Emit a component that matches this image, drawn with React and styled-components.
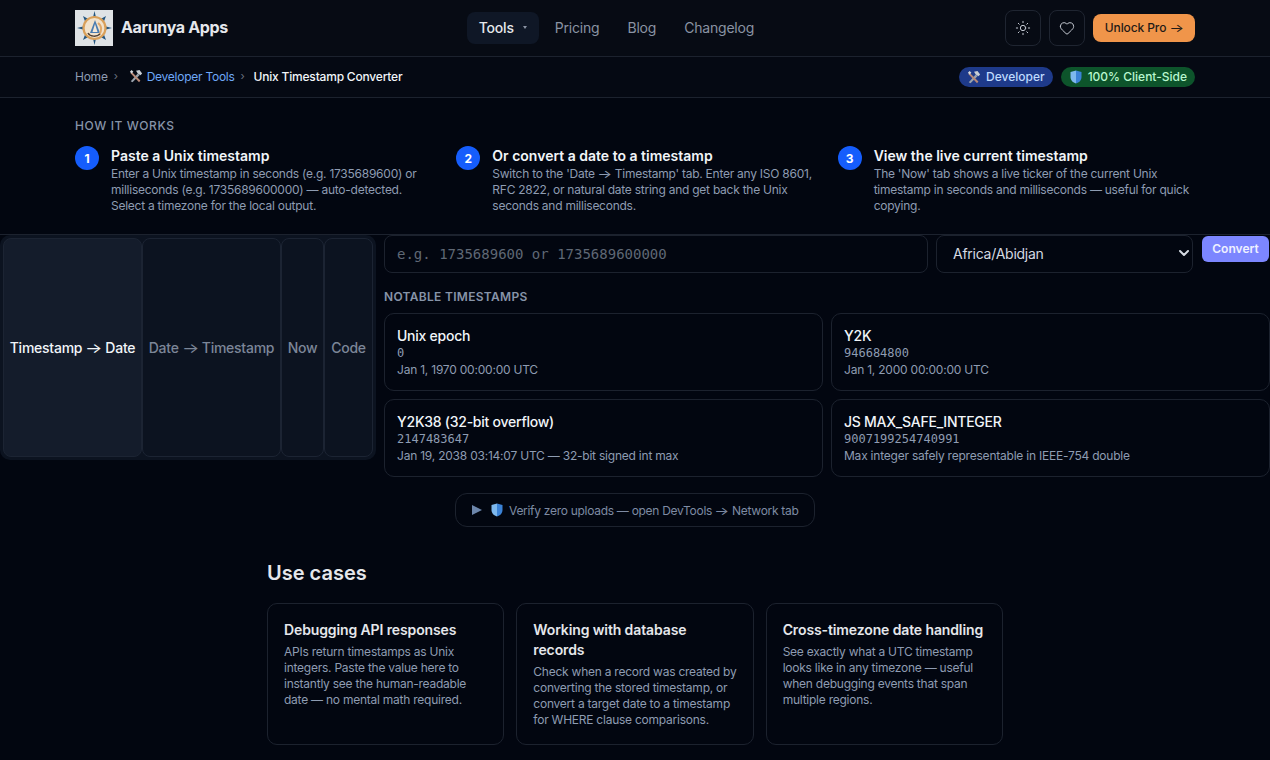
import React from 'react';
import styled, { createGlobalStyle } from 'styled-components';
import { Sun, Heart, ChevronDown } from 'lucide-react';

const GlobalStyle = createGlobalStyle`
  * { box-sizing: border-box; }
  html, body { margin: 0; padding: 0; background: #020610; }
  body {
    font-family: Inter, "Noto Sans", sans-serif;
    color: #e2e8f0;
    overflow: hidden;
    height: 760px;
  }
`;

const Page = styled.div`
  width: 1270px;
  height: 760px;
  overflow: hidden;
`;

const Header = styled.header`
  height: 57px;
  background: #070b14;
  border-bottom: 1px solid #1c222e;
  padding: 0 75px;
  display: flex;
  justify-content: space-between;
  align-items: center;
`;

const Brand = styled.div`
  display: flex;
  align-items: center;
  gap: 8px;
  font-size: 16px;
  font-weight: 700;
  letter-spacing: -0.35px;
  color: #e5e7eb;
  span { margin-top: -2px; }
`;

const LogoBox = styled.div`
  width: 38px;
  height: 36px;
  background: #dfe3e6;
  display: flex;
  align-items: center;
  justify-content: center;
`;

const Nav = styled.nav`
  display: flex;
  align-items: center;
  gap: 4px;
`;

const NavItem = styled.div`
  height: 32px;
  display: flex;
  align-items: center;
  gap: 9px;
  padding: 0 12px 2px;
  border-radius: 8px;
  font-size: 14px;
  letter-spacing: -0.2px;
  font-weight: ${p => (p.$active ? 500 : 400)};
  color: ${p => (p.$active ? '#e5e7eb' : '#8a93a3')};
  background: ${p => (p.$active ? '#0f1726' : 'transparent')};
`;

const Caret = styled.span`
  width: 0;
  height: 0;
  border-left: 2.5px solid transparent;
  border-right: 2.5px solid transparent;
  border-top: 3px solid #8a93a3;
`;

const Actions = styled.div`
  display: flex;
  justify-content: flex-end;
  align-items: center;
  gap: 8px;
`;

const IconButton = styled.div`
  width: 36px;
  height: 36px;
  border: 1px solid #1f2531;
  border-radius: 8px;
  display: flex;
  align-items: center;
  justify-content: center;
  color: #c3c8d1;
`;

const ProButton = styled.div`
  height: 28px;
  width: 102px;
  padding-bottom: 2px;
  border-radius: 8px;
  background: #f0954a;
  color: #1f1a17;
  font-size: 12px;
  font-weight: 500;
  letter-spacing: -0.1px;
  display: flex;
  align-items: center;
  justify-content: center;
`;

const CrumbBar = styled.div`
  height: 41px;
  background: #050913;
  border-bottom: 1px solid #1c222e;
  padding: 0 75px;
  display: flex;
  align-items: center;
  justify-content: space-between;
  font-size: 12px;
`;

const Crumbs = styled.div`
  display: flex;
  align-items: center;
  gap: 6px;
  padding-bottom: 2px;
`;

const Crumb = styled.span`
  display: flex;
  align-items: center;
  gap: 4px;
  letter-spacing: ${p => (p.$current ? '-0.2px' : '-0.25px')};
  margin-left: ${p => (p.$current ? '-2px' : '0')};
  color: ${p => p.$color};
  font-weight: ${p => (p.$current ? 500 : 400)};
`;

const Sep = styled.span`
  width: 4px;
  margin-right: 5px;
  color: #6b7280;
  font-size: 11px;
`;

const Badges = styled.div`
  display: flex;
  gap: 8px;
`;

const Badge = styled.span`
  height: 20px;
  padding: 0 8px 1px;
  border-radius: 10px;
  display: flex;
  align-items: center;
  gap: 5px;
  font-size: 12px;
  font-weight: 500;
  background: ${p => p.$bg};
  color: ${p => p.$color};
`;

const HowItWorks = styled.section`
  height: 136px;
  padding: 20px 75px 0;
  background: #020610;
`;

const SmallHead = styled.div`
  font-size: 12px;
  line-height: 16px;
  font-weight: 500;
  letter-spacing: 0.6px;
  color: #8794a8;
`;

const Steps = styled.div`
  margin-top: 12px;
  display: grid;
  grid-template-columns: repeat(3, 1fr);
  gap: 24px;
`;

const Step = styled.div`
  display: flex;
  gap: 12px;
`;

const StepNum = styled.div`
  width: 24px;
  height: 24px;
  flex: none;
  border-radius: 50%;
  background: #155dfc;
  color: #fff;
  font-size: 12px;
  font-weight: 700;
  display: flex;
  align-items: center;
  justify-content: center;
`;

const StepTitle = styled.div`
  font-size: 14px;
  line-height: 20px;
  font-weight: 600;
  color: #f1f5f9;
`;

const StepText = styled.div`
  font-size: 12px;
  line-height: 16px;
  letter-spacing: -0.25px;
  color: #8e9cb2;
`;

const Tool = styled.section`
  display: grid;
  grid-template-columns: 376px 1fr;
  border-top: 1px solid #1c222e;
  column-gap: 8px;
  align-items: start;
`;

const TabList = styled.div`
  display: flex;
  height: 225px;
  padding: 3px;
  background: #0c1320;
  border-radius: 10px;
`;

const Tab = styled.div`
  flex: none;
  width: ${p => p.$w}px;
  border: 1px solid #1c2433;
  border-radius: 8px;
  background: ${p => (p.$active ? '#141c2b' : '#0c1320')};
  color: ${p => (p.$active ? '#f1f5f9' : '#7c8698')};
  font-size: 14px;
  font-weight: 500;
  letter-spacing: -0.25px;
  display: flex;
  align-items: center;
  justify-content: center;
  white-space: nowrap;
`;

const Panel = styled.div`
  display: flex;
  flex-direction: column;
`;

const InputRow = styled.div`
  display: flex;
  align-items: flex-start;
  gap: 8px;
`;

const TsInput = styled.input`
  width: 544px;
  height: 38px;
  background: transparent;
  border: 1px solid #1c222e;
  border-radius: 8px;
  padding: 0 12px;
  font-family: "DejaVu Sans Mono", monospace;
  font-size: 14px;
  color: #e5e7eb;
  &::placeholder { color: #5f6875; opacity: 1; }
`;

const Select = styled.div`
  width: 257px;
  height: 38px;
  border: 1px solid #1c222e;
  border-radius: 8px;
  padding: 0 0 2px 16px;
  font-size: 14px;
  letter-spacing: -0.25px;
  color: #d5dae2;
  display: flex;
  align-items: center;
  justify-content: space-between;
`;

const Convert = styled.div`
  width: 67px;
  height: 26px;
  margin: 1px 0 0 1px;
  padding-bottom: 2px;
  border-radius: 6px;
  background: #7c86ff;
  color: #eef0ff;
  font-size: 12px;
  font-weight: 600;
  display: flex;
  align-items: center;
  justify-content: center;
`;

const NotableHead = styled(SmallHead)`
  margin-top: 16px;
  font-weight: 600;
  letter-spacing: 0.3px;
`;

const NotableGrid = styled.div`
  margin-top: 8px;
  display: grid;
  grid-template-columns: repeat(2, 1fr);
  gap: 8px;
`;

const NotableCard = styled.div`
  height: 78px;
  border: 1px solid #1c222e;
  border-radius: 10px;
  padding: 13px 12px 0;
`;

const CardTitle = styled.div`
  font-size: 14px;
  line-height: 18px;
  font-weight: 500;
  letter-spacing: -0.25px;
  color: #f1f5f9;
`;

const CardMono = styled.div`
  font-family: "DejaVu Sans Mono", monospace;
  font-size: 12px;
  line-height: 16px;
  margin-bottom: 1px;
  color: #8e9cb2;
`;

const CardText = styled.div`
  font-size: 12px;
  line-height: 16px;
  letter-spacing: -0.22px;
  color: #8e9cb2;
`;

const VerifyRow = styled.div`
  margin-top: 16px;
  display: flex;
  justify-content: center;
`;

const Verify = styled.div`
  width: 360px;
  height: 34px;
  border: 1px solid #1c222e;
  border-radius: 12px;
  padding-left: 16px;
  display: flex;
  align-items: center;
  gap: 5px;
  font-size: 12px;
  letter-spacing: -0.29px;
  color: #7e8ba3;
`;

const PlayIcon = styled.span`
  width: 0;
  height: 0;
  border-top: 5px solid transparent;
  border-bottom: 5px solid transparent;
  border-left: 10px solid #6c86ab;
  margin-right: 3px;
`;

const UseCases = styled.section`
  width: 736px;
  margin: 32px auto 0;
`;

const UseHead = styled.h2`
  margin: 0 0 16px;
  font-size: 20px;
  line-height: 28px;
  font-weight: 600;
  color: #e5e7eb;
`;

const UseGrid = styled.div`
  display: grid;
  grid-template-columns: repeat(3, 1fr);
  gap: 12px;
`;

const UseCard = styled.div`
  height: 142px;
  border: 1px solid #1c222e;
  border-radius: 10px;
  padding: 16px;
`;

const UseTitle = styled.div`
  font-size: 14px;
  line-height: 20px;
  font-weight: 600;
  letter-spacing: -0.12px;
  color: #e5e7eb;
  margin-bottom: 4px;
`;

const UseText = styled.div`
  font-size: 12px;
  line-height: 16px;
  letter-spacing: -0.24px;
  color: #8e9cb2;
`;

// the reference font has a long thin arrow, Inter's is shorter
const Arrow = styled.span`
  display: inline-block;
  font-weight: 400;
  letter-spacing: 0;
  margin: 0 0.1em;
  transform: scaleX(1.3);
`;

const withArrows = (text) => {
  const parts = text.split('→');
  return parts.map((part, i) => (
    <React.Fragment key={i}>
      {i > 0 && <Arrow>→</Arrow>}
      {part}
    </React.Fragment>
  ));
};

// small compass rose standing in for the logo picture
const Logo = () => (
  <svg width="38" height="36" viewBox="0 0 38 36">
    <g fill="#23557f">
      <polygon points="19.5,1 22,12 17,12" />
      <polygon points="19.5,35 22,24 17,24" />
      <polygon points="2,18 12,15.5 12,20.5" />
      <polygon points="37,18 27,15.5 27,20.5" />
      <polygon points="8,6 15,10 11,14" />
      <polygon points="31,6 28,14 24,10" />
      <polygon points="8,30 11,22 15,26" />
      <polygon points="31,30 24,26 28,22" />
    </g>
    <circle cx="19.5" cy="18" r="11" fill="#f1e2cc" stroke="#d9a05a" strokeWidth="2.2" />
    <polygon points="20,10 25,23 15,23" fill="#4a7cb0" />
    <polygon points="20,14 22.5,22 17.5,22" fill="#f4e8d8" />
    <path d="M23 13 C27 16 27 21 24 25" fill="none" stroke="#e0a96a" strokeWidth="2" />
    <path d="M13 23 C15 27 22 27 25 24" fill="none" stroke="#4f4034" strokeWidth="1.5" />
  </svg>
);

const ToolsEmoji = () => (
  <svg width="14" height="14" viewBox="0 0 16 16">
    <path d="M2 14 L10 5 L12 7 L4 15 Z" fill="#9aa3ad" />
    <path d="M8 2 L12 1 L15 5 L13 7 L10 5 Z" fill="#c9ced4" />
    <path d="M3 3 L13 13 L11.5 15 L1.5 4.5 Z" fill="#b98a78" />
    <path d="M1 3 L3 1 L5 3 L3 5 Z" fill="#d5d9de" />
  </svg>
);

const ShieldEmoji = () => (
  <svg width="14" height="14" viewBox="0 0 14 14">
    <path d="M7 0.5 L12.5 2 V7 C12.5 10.5 10 12.5 7 13.5 Z" fill="#3b82d6" />
    <path d="M7 0.5 L1.5 2 V7 C1.5 10.5 4 12.5 7 13.5 Z" fill="#7db8ee" />
  </svg>
);

const steps = [
  {
    title: 'Paste a Unix timestamp',
    text: 'Enter a Unix timestamp in seconds (e.g. 1735689600) or milliseconds (e.g. 1735689600000) — auto-detected. Select a timezone for the local output.',
  },
  {
    title: 'Or convert a date to a timestamp',
    text: "Switch to the 'Date → Timestamp' tab. Enter any ISO 8601, RFC 2822, or natural date string and get back the Unix seconds and milliseconds.",
  },
  {
    title: 'View the live current timestamp',
    text: "The 'Now' tab shows a live ticker of the current Unix timestamp in seconds and milliseconds — useful for quick copying.",
  },
];

const tabs = [
  { label: 'Timestamp → Date', w: 139, active: true },
  { label: 'Date → Timestamp', w: 139 },
  { label: 'Now', w: 43 },
  { label: 'Code', w: 49 },
];

const notable = [
  { title: 'Unix epoch', value: '0', note: 'Jan 1, 1970 00:00:00 UTC' },
  { title: 'Y2K', value: '946684800', note: 'Jan 1, 2000 00:00:00 UTC' },
  { title: 'Y2K38 (32-bit overflow)', value: '2147483647', note: 'Jan 19, 2038 03:14:07 UTC — 32-bit signed int max' },
  { title: 'JS MAX_SAFE_INTEGER', value: '9007199254740991', note: 'Max integer safely representable in IEEE-754 double' },
];

const useCases = [
  {
    title: 'Debugging API responses',
    text: 'APIs return timestamps as Unix integers. Paste the value here to instantly see the human-readable date — no mental math required.',
  },
  {
    title: 'Working with database records',
    text: 'Check when a record was created by converting the stored timestamp, or convert a target date to a timestamp for WHERE clause comparisons.',
  },
  {
    title: 'Cross-timezone date handling',
    text: 'See exactly what a UTC timestamp looks like in any timezone — useful when debugging events that span multiple regions.',
  },
];

export default function App() {
  return (
    <Page>
      <GlobalStyle />
      <Header>
        <Brand>
          <LogoBox><Logo /></LogoBox>
          <span>Aarunya Apps</span>
        </Brand>
        <Nav>
          <NavItem $active>Tools <Caret /></NavItem>
          <NavItem>Pricing</NavItem>
          <NavItem>Blog</NavItem>
          <NavItem>Changelog</NavItem>
        </Nav>
        <Actions>
          <IconButton><Sun size={16} strokeWidth={1.5} /></IconButton>
          <IconButton><Heart size={16} strokeWidth={1.5} /></IconButton>
          <ProButton><span>Unlock Pro {withArrows('→')}</span></ProButton>
        </Actions>
      </Header>

      <CrumbBar>
        <Crumbs>
          <Crumb $color="#8e9cb2">Home</Crumb>
          <Sep>›</Sep>
          <Crumb $color="#6ea8f7"><ToolsEmoji /> Developer Tools</Crumb>
          <Sep>›</Sep>
          <Crumb $color="#f1f5f9" $current>Unix Timestamp Converter</Crumb>
        </Crumbs>
        <Badges>
          <Badge $bg="#1e3a8a" $color="#bfdbfe"><ToolsEmoji /> Developer</Badge>
          <Badge $bg="#0d542b" $color="#b9f8cf"><ShieldEmoji /> 100% Client-Side</Badge>
        </Badges>
      </CrumbBar>

      <HowItWorks>
        <SmallHead>HOW IT WORKS</SmallHead>
        <Steps>
          {steps.map((s, i) => (
            <Step key={s.title}>
              <StepNum>{i + 1}</StepNum>
              <div>
                <StepTitle>{s.title}</StepTitle>
                <StepText>{withArrows(s.text)}</StepText>
              </div>
            </Step>
          ))}
        </Steps>
      </HowItWorks>

      <Tool>
        <TabList>
          {tabs.map(t => (
            <Tab key={t.label} $w={t.w} $active={t.active}>
              <span>{withArrows(t.label)}</span>
            </Tab>
          ))}
        </TabList>
        <Panel>
          <InputRow>
            <TsInput placeholder="e.g. 1735689600 or 1735689600000" />
            <Select>
              Africa/Abidjan
              <ChevronDown size={16} strokeWidth={3} color="#d5dae2" />
            </Select>
            <Convert>Convert</Convert>
          </InputRow>
          <NotableHead>NOTABLE TIMESTAMPS</NotableHead>
          <NotableGrid>
            {notable.map(n => (
              <NotableCard key={n.title}>
                <CardTitle>{n.title}</CardTitle>
                <CardMono>{n.value}</CardMono>
                <CardText>{n.note}</CardText>
              </NotableCard>
            ))}
          </NotableGrid>
        </Panel>
      </Tool>

      <VerifyRow>
        <Verify>
          <PlayIcon />
          <ShieldEmoji />
          <span>{withArrows('Verify zero uploads — open DevTools → Network tab')}</span>
        </Verify>
      </VerifyRow>

      <UseCases>
        <UseHead>Use cases</UseHead>
        <UseGrid>
          {useCases.map(u => (
            <UseCard key={u.title}>
              <UseTitle>{u.title}</UseTitle>
              <UseText>{u.text}</UseText>
            </UseCard>
          ))}
        </UseGrid>
      </UseCases>
    </Page>
  );
}
